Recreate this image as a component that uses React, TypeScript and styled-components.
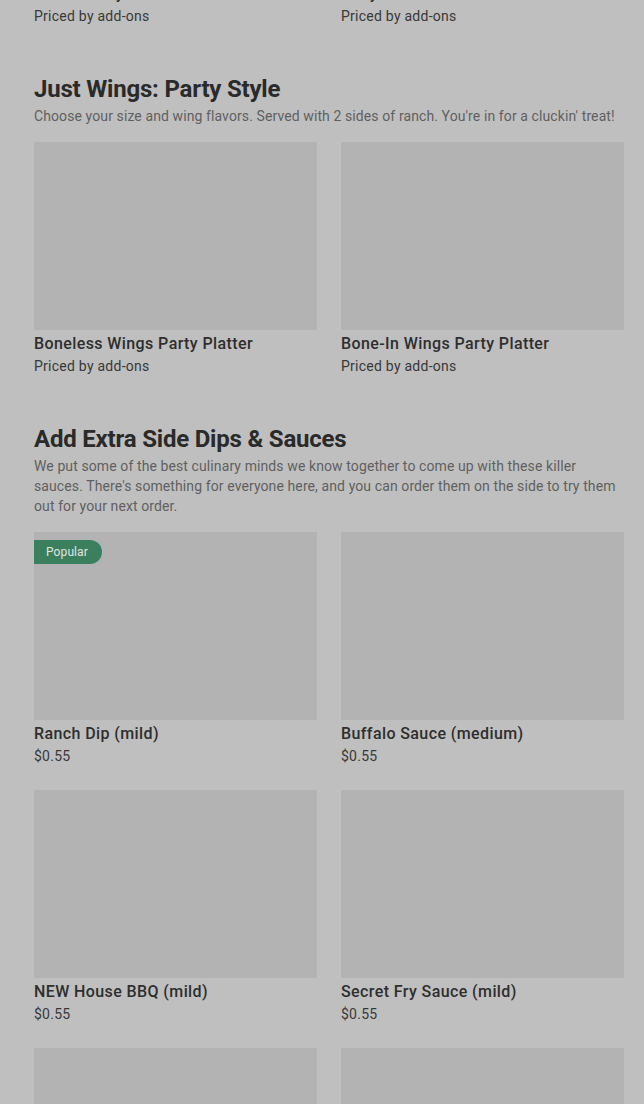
import React from 'react';
import styled, { createGlobalStyle } from 'styled-components';

const GlobalStyle = createGlobalStyle`
  html, body {
    margin: 0;
    padding: 0;
    background: #bfbfbf;
    overflow: hidden;
  }
  body {
    font-family: Roboto, "Noto Sans", sans-serif;
  }
`;

const Page = styled.div`
  width: 644px;
  height: 1104px;
  overflow: hidden;
  box-sizing: border-box;
  padding: 0 20px 0 34px;
  background: #bfbfbf;
`;

const Section = styled.section<{ $lead?: boolean }>`
  margin-top: ${(p) => (p.$lead ? '-208px' : '47px')};
`;

const Heading = styled.h2`
  margin: 0;
  font-size: 24px;
  line-height: 32px;
  font-weight: 700;
  letter-spacing: -0.2px;
  color: #2a2a2a;
`;

const Description = styled.p`
  margin: 1px 0 0 0;
  font-size: 14px;
  line-height: 20px;
  letter-spacing: 0.1px;
  color: #5f5f5f;
`;

const Grid = styled.div<{ $spaced?: boolean }>`
  display: grid;
  grid-template-columns: 283px 283px;
  column-gap: 24px;
  row-gap: 24px;
  margin-top: ${(p) => (p.$spaced ? '16px' : '0')};
`;

const Card = styled.div`
  display: flex;
  flex-direction: column;
`;

const Thumb = styled.div`
  position: relative;
  height: 188px;
  background: #b3b3b3;
`;

const Badge = styled.span`
  position: absolute;
  top: 8px;
  left: 0;
  height: 24px;
  padding: 0 14px 0 12px;
  display: flex;
  align-items: center;
  background: #3b805d;
  color: #e3e3e3;
  font-size: 12px;
  letter-spacing: 0.1px;
  border-radius: 0 12px 12px 0;
`;

const Title = styled.div`
  padding-top: 5px;
  font-size: 16px;
  line-height: 18px;
  font-weight: 500;
  color: #2e2e2e;
  letter-spacing: 0.4px;
`;

const Sub = styled.div`
  margin-top: 3px;
  font-size: 14px;
  line-height: 20px;
  letter-spacing: 0.25px;
  color: #383838;
`;

interface Item {
  title: string;
  sub: string;
  popular?: boolean;
}

const ItemCard: React.FC<{ item: Item }> = ({ item }) => (
  <Card>
    <Thumb>{item.popular && <Badge>Popular</Badge>}</Thumb>
    <Title>{item.title}</Title>
    <Sub>{item.sub}</Sub>
  </Card>
);

const leadItems: Item[] = [
  { title: 'Mixed Party Platter', sub: 'Priced by add-ons' },
  { title: 'Daily Platter', sub: 'Priced by add-ons' },
];

const partyItems: Item[] = [
  { title: 'Boneless Wings Party Platter', sub: 'Priced by add-ons' },
  { title: 'Bone-In Wings Party Platter', sub: 'Priced by add-ons' },
];

const sauceItems: Item[] = [
  { title: 'Ranch Dip (mild)', sub: '$0.55', popular: true },
  { title: 'Buffalo Sauce (medium)', sub: '$0.55' },
  { title: 'NEW House BBQ (mild)', sub: '$0.55' },
  { title: 'Secret Fry Sauce (mild)', sub: '$0.55' },
  { title: 'Garlic Parmesan (mild)', sub: '$0.55' },
  { title: 'Honey Mustard (mild)', sub: '$0.55' },
];

export default function App() {
  return (
    <Page>
      <GlobalStyle />
      <Section $lead>
        <Grid>
          {leadItems.map((it) => (
            <ItemCard key={it.title} item={it} />
          ))}
        </Grid>
      </Section>
      <Section>
        <Heading>Just Wings: Party Style</Heading>
        <Description>
          Choose your size and wing flavors. Served with 2 sides of ranch. You're in for a cluckin' treat!
        </Description>
        <Grid $spaced>
          {partyItems.map((it) => (
            <ItemCard key={it.title} item={it} />
          ))}
        </Grid>
      </Section>
      <Section>
        <Heading>Add Extra Side Dips &amp; Sauces</Heading>
        <Description>
          We put some of the best culinary minds we know together to come up with these killer sauces. There's
          something for everyone here, and you can order them on the side to try them out for your next order.
        </Description>
        <Grid $spaced>
          {sauceItems.map((it) => (
            <ItemCard key={it.title} item={it} />
          ))}
        </Grid>
      </Section>
    </Page>
  );
}
